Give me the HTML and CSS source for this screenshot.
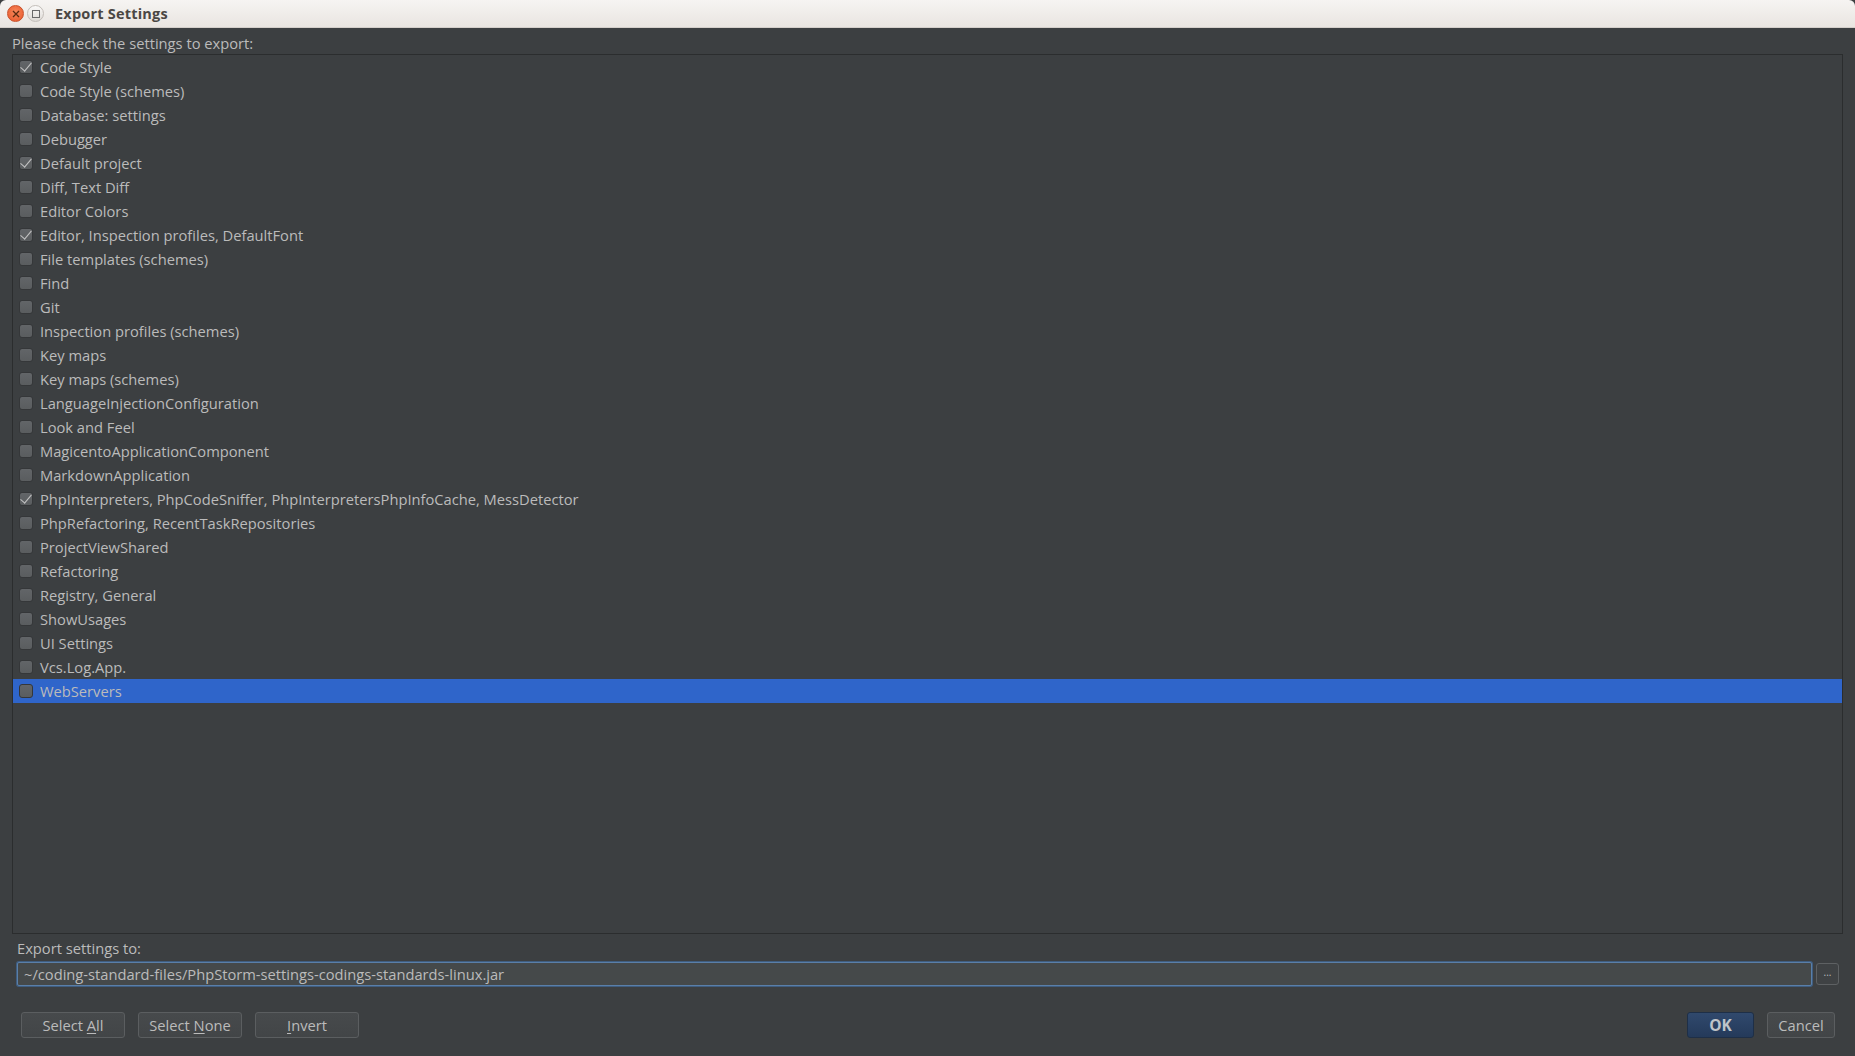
FILE: index.html
```html
<!DOCTYPE html>
<html>
<head>
<meta charset="utf-8">
<link rel="stylesheet" href="styles.css">
</head>
<body>
<div class="window">
  <div class="titlebar">
    <span class="wbtn close"><svg width="8" height="8" viewBox="0 0 8 8"><path d="M1 1L7 7M7 1L1 7" stroke="#5a2a10" stroke-width="1.3"/></svg></span>
    <span class="wbtn max"><svg width="8" height="8" viewBox="0 0 8 8"><rect x="0.5" y="0.5" width="7" height="7" fill="none" stroke="#6a6a6a" stroke-width="1"/></svg></span>
    <span class="title">Export Settings</span>
  </div>
  <div class="content">
    <div class="prompt">Please check the settings to export:</div>
    <div class="panel">
      <ul class="list">
        <li class="row"><span class="cb checked"></span>Code Style</li>
        <li class="row"><span class="cb"></span>Code Style (schemes)</li>
        <li class="row"><span class="cb"></span>Database: settings</li>
        <li class="row"><span class="cb"></span>Debugger</li>
        <li class="row"><span class="cb checked"></span>Default project</li>
        <li class="row"><span class="cb"></span>Diff, Text Diff</li>
        <li class="row"><span class="cb"></span>Editor Colors</li>
        <li class="row"><span class="cb checked"></span>Editor, Inspection profiles, DefaultFont</li>
        <li class="row"><span class="cb"></span>File templates (schemes)</li>
        <li class="row"><span class="cb"></span>Find</li>
        <li class="row"><span class="cb"></span>Git</li>
        <li class="row"><span class="cb"></span>Inspection profiles (schemes)</li>
        <li class="row"><span class="cb"></span>Key maps</li>
        <li class="row"><span class="cb"></span>Key maps (schemes)</li>
        <li class="row"><span class="cb"></span>LanguageInjectionConfiguration</li>
        <li class="row"><span class="cb"></span>Look and Feel</li>
        <li class="row"><span class="cb"></span>MagicentoApplicationComponent</li>
        <li class="row"><span class="cb"></span>MarkdownApplication</li>
        <li class="row"><span class="cb checked"></span>PhpInterpreters, PhpCodeSniffer, PhpInterpretersPhpInfoCache, MessDetector</li>
        <li class="row"><span class="cb"></span>PhpRefactoring, RecentTaskRepositories</li>
        <li class="row"><span class="cb"></span>ProjectViewShared</li>
        <li class="row"><span class="cb"></span>Refactoring</li>
        <li class="row"><span class="cb"></span>Registry, General</li>
        <li class="row"><span class="cb"></span>ShowUsages</li>
        <li class="row"><span class="cb"></span>UI Settings</li>
        <li class="row"><span class="cb"></span>Vcs.Log.App.</li>
        <li class="row selected"><span class="cb"></span>WebServers</li>
      </ul>
    </div>
    <div class="export">
      <div class="export-label">Export settings to:</div>
      <div class="path-row">
        <div class="path-field">~/coding-standard-files/PhpStorm-settings-codings-standards-linux.jar</div>
        <div class="browse">...</div>
      </div>
    </div>
    <div class="buttons">
      <div class="btn-group">
        <span class="btn"><span>Select <u>A</u>ll</span></span>
        <span class="btn"><span>Select <u>N</u>one</span></span>
        <span class="btn"><span><u>I</u>nvert</span></span>
      </div>
      <div class="btn-group right">
        <span class="btn ok">OK</span>
        <span class="btn cancel">Cancel</span>
      </div>
    </div>
  </div>
</div>
</body>
</html>
```

FILE: styles.css
```css
* { box-sizing: border-box; }
html, body {
  margin: 0;
  padding: 0;
  width: 1855px;
  height: 1056px;
  overflow: hidden;
  background: #3c3f41;
}
body {
  font-family: "Open Sans", "Noto Sans", "DejaVu Sans", sans-serif;
  font-size: 14.7px;
  color: #bbbbbb;
}
.window {
  display: flex;
  flex-direction: column;
  height: 1056px;
}
.titlebar {
  height: 28px;
  flex: none;
  display: flex;
  align-items: center;
  background: linear-gradient(#f6f4f2, #e9e5e1);
  border-radius: 6px 6px 0 0;
  padding-left: 7px;
  border-bottom: 1px solid #d4cfca;
}
.wbtn {
  width: 17px;
  height: 17px;
  border-radius: 50%;
  display: inline-flex;
  align-items: center;
  justify-content: center;
  margin-right: 3px;
}
.wbtn.close {
  background: radial-gradient(circle at 50% 40%, #f7875a, #e8562a);
  border: 1px solid #c8502a;
}
.wbtn.max {
  background: linear-gradient(#fbfaf9, #dedad6);
  border: 1px solid #c3beb9;
}
.title {
  margin-left: 8px;
  font-weight: bold;
  font-size: 14.5px;
  color: #4b4744;
  letter-spacing: 0.2px;
}
.content {
  flex: 1;
  display: flex;
  flex-direction: column;
  padding: 0 12px;
}
.prompt {
  height: 26px;
  line-height: 18px;
  padding-top: 6px;
}
.panel {
  height: 880px;
  border: 1px solid #2b2d2e;
  background: #3c3f41;
}
.list {
  list-style: none;
  margin: 0;
  padding: 0;
}
.row {
  height: 24px;
  display: flex;
  align-items: center;
  padding-left: 6px;
  white-space: nowrap;
}
.row.selected {
  background: #2f65ca;
}
.cb {
  width: 14px;
  height: 14px;
  border-radius: 3px;
  background: linear-gradient(#626568, #5a5d5f);
  border: 1px solid #353739;
  margin-right: 7px;
  position: relative;
  flex: none;
}
.cb.checked::after {
  content: "";
  position: absolute;
  left: 3px;
  top: -1px;
  width: 5px;
  height: 10px;
  border-right: 1.5px solid #c4c4c4;
  border-bottom: 1.5px solid #c4c4c4;
  transform: rotate(40deg);
}
.export {
  padding-left: 5px;
  padding-top: 4px;
}
.export-label {
  height: 24px;
  line-height: 20px;
}
.path-row {
  display: flex;
  align-items: center;
  gap: 4px;
}
.path-field {
  width: 1795px;
  height: 24px;
  border: 1px solid #5a7fa8;
  border-radius: 2px;
  background: #45494a;
  line-height: 22px;
  padding-left: 6px;
  box-shadow: 0 0 0 1px #3f5d80;
}
.browse {
  width: 23px;
  height: 22px;
  border: 1px solid #5e6163;
  border-radius: 3px;
  background: #3f4244;
  font-size: 10px;
  line-height: 16px;
  text-align: center;
  color: #bbbbbb;
}
.buttons {
  display: flex;
  justify-content: space-between;
  padding: 26px 8px 0 9px;
}
.btn-group {
  display: flex;
  gap: 13px;
}
.btn {
  width: 104px;
  height: 26px;
  display: inline-flex;
  align-items: center;
  justify-content: center;
  border: 1px solid #5b5e60;
  border-radius: 3px;
  background: linear-gradient(#474a4c, #424547);
  color: #bbbbbb;
  white-space: nowrap;
}
.btn u {
  text-underline-offset: 2px;
}
.btn.ok {
  width: 67px;
  font-weight: bold;
  font-size: 15.5px;
  background: linear-gradient(#30496d, #243a5a);
  border-color: #1e2f47;
  color: #bfc4c9;
}
.btn.cancel {
  width: 68px;
}
```
